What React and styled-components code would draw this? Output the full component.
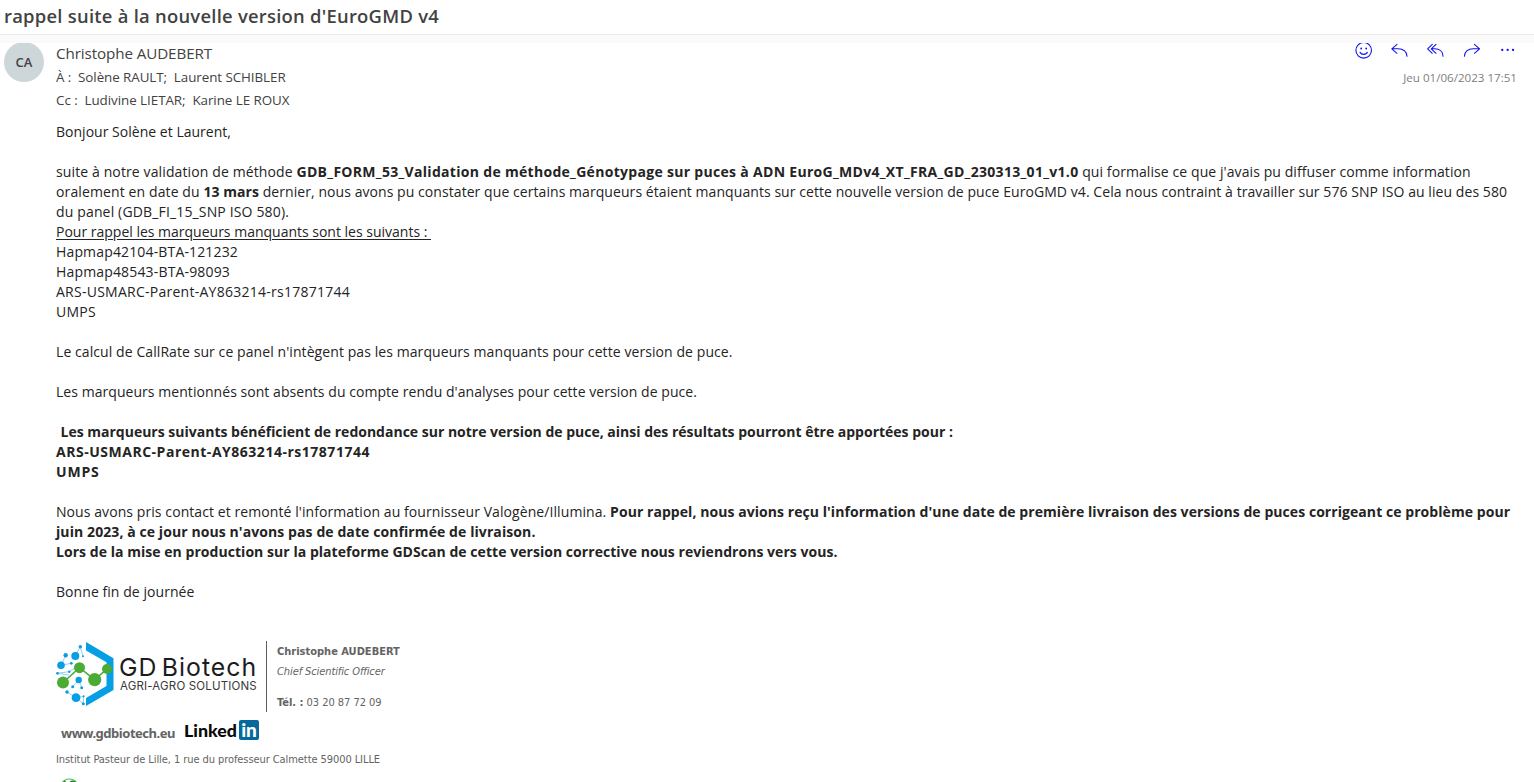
import React from "react";
import styled, { createGlobalStyle } from "styled-components";

const GlobalStyle = createGlobalStyle`
  *, *::before, *::after { box-sizing: border-box; }
  body {
    margin: 0;
    background: #fff;
    color: #242424;
    font-family: "Open Sans", "Noto Sans", sans-serif;
    overflow: hidden;
  }
`;

const Page = styled.main`
  height: 782px;
  overflow: hidden;
  display: flex;
  flex-direction: column;
`;

const SubjectBar = styled.header`
  flex: none;
  height: 35px;
  padding-left: 4px;
  border-bottom: 1px solid #ececec;
`;

const Subject = styled.h1`
  margin: 0;
  font-size: 18.4px;
  font-weight: 600;
  line-height: 32px;
  letter-spacing: 0.253px;
  white-space: pre;
  color: #424242;
`;

const Band = styled.div`
  flex: none;
  height: 8px;
  background: #fafafa;
`;

const Message = styled.article`
  flex: 1;
  min-height: 0;
  overflow: hidden;
  display: flex;
  padding-left: 4px;
`;

const Avatar = styled.div`
  flex: none;
  width: 40px;
  height: 40px;
  margin: -1px 12px 0 0;
  border-radius: 50%;
  background: #cdd6d8;
  color: #424242;
  font-size: 13px;
  font-weight: 600;
  line-height: 41px;
  text-align: center;
`;

const Content = styled.div`
  flex: 1;
  min-width: 0;
`;

const Header = styled.div`
  display: flex;
  justify-content: space-between;
  height: 79px;
`;

const Sender = styled.div`
  padding-bottom: 2px;
  font-size: 15.2px;
  line-height: 20px;
  letter-spacing: -0.1px;
  white-space: pre;
  color: #424242;
`;

const Recipients = styled.div`
  padding-top: 1px;
  font-size: 13.4px;
  line-height: 22px;
  letter-spacing: ${(p) => p.$ls}px;
  white-space: pre;
  color: #424242;
`;

const Meta = styled.div`
  display: flex;
  flex-direction: column;
  align-items: flex-end;
`;

const Actions = styled.div`
  display: flex;
  padding-right: 8px;
`;

const Action = styled.button`
  width: 36px;
  height: 22px;
  padding: 0;
  border: 0;
  background: none;

  svg {
    display: block;
    fill: none;
    stroke: #1010f4;
    stroke-width: 1.08;
    stroke-linecap: round;
    stroke-linejoin: round;
  }
`;

const DateText = styled.time`
  padding: 2px 17px 0 0;
  font-size: 11.6px;
  line-height: 22px;
  white-space: pre;
  color: #808080;
`;

const Body = styled.div`
  font-size: 14px;
`;

const Line = styled.p`
  margin: 0;
  min-height: 20px;
  padding-left: ${(p) => p.$indent || 0}px;
  line-height: 20px;
  white-space: pre;
`;

const Run = styled.span`
  font-weight: ${(p) => (p.$bold ? 700 : 400)};
  letter-spacing: ${(p) => p.$ls || 0}px;
  text-decoration: ${(p) => (p.$underline ? "underline" : "none")};
  text-underline-offset: 2px;
`;

const Signature = styled.footer`
  padding-top: 39px;
  color: #636363;
  font-family: "DejaVu Sans Condensed", "Noto Sans", sans-serif;
  font-size: 11px;
`;

const Card = styled.div`
  display: flex;
  height: 71px;
`;

const Brand = styled.div`
  display: flex;
  width: 211px;
  border-right: 1px solid #5c5c5c;
`;

const BrandText = styled.div`
  padding: 14px 0 0 3px;
  font-family: Inter, sans-serif;
  white-space: pre;
  color: #1c1c1c;
`;

const BrandName = styled.div`
  font-size: 24.8px;
  line-height: 24px;
  letter-spacing: 1px;
  word-spacing: -3.5px;
`;

const BrandTagline = styled.div`
  padding-left: 1px;
  font-size: 11.5px;
  line-height: 15px;
  letter-spacing: 0.17px;
  color: #3a3a3a;
`;

const Contact = styled.div`
  padding: 1px 0 0 10px;
`;

const ContactLine = styled.div`
  padding-top: ${(p) => p.$top || 0}px;
  line-height: 20px;
  letter-spacing: ${(p) => p.$ls || 0}px;
  font-weight: ${(p) => (p.$bold ? 700 : 400)};
  font-style: ${(p) => (p.$italic ? "italic" : "normal")};
  white-space: pre;
`;

const Links = styled.div`
  display: flex;
  height: 37px;
  padding: 8px 0 0 5px;
`;

const Site = styled.a`
  width: 123px;
  padding-top: 3px;
  font-family: "Noto Sans", sans-serif;
  font-size: 13px;
  font-weight: 700;
  line-height: 20px;
  letter-spacing: -0.476px;
`;

const LinkedIn = styled.div`
  display: flex;
  font-family: Lato, sans-serif;
  font-weight: 900;
  font-size: 17.8px;
  line-height: 20px;
  color: #0a0a0a;
`;

const LinkedWord = styled.span`
  width: 55px;
`;

const InBadge = styled.span`
  width: 20px;
  height: 20px;
  border-radius: 2px;
  background: #06699b;
  color: #fff;
  font-size: 19px;
  text-align: center;
`;

const Address = styled.div`
  line-height: 22px;
  letter-spacing: -0.075px;
  white-space: pre;
`;

const EcoIcon = styled.svg`
  display: block;
  margin: 7px 0 0 4px;
`;

const blueDots = [
  [19.3, 15, 4], [5, 24.3, 3.8], [24.3, 5.7, 1.7], [9.7, 14.3, 2.2], [27, 15.3, 1],
  [15.3, 22.3, 1.4], [1.5, 32.3, 1.4], [13.3, 30.7, 1.2], [22.7, 39, 3.2], [25.7, 46.7, 1.5],
  [16.7, 45.7, 1.5], [11, 51, 1.8], [20, 56.7, 4.4], [27.7, 55.3, 1], [27.3, 62.7, 1.5],
];
const greenDots = [[7, 41.5, 6], [23.5, 26.7, 5.5], [38.7, 38.7, 6.6], [51, 28, 5]];

const BrandMark = () => (
  <svg width="60" height="68" viewBox="0 0 60 68">
    <path d="M30 1 57.5 17.2V48.9L30 65V57L50.5 45V21.3L30 9.5Z" fill="#069fe3" />
    <path
      d="M19.3 15 24.3 5.7 27 15.3M9.7 14.3 5 24.3 15.3 22.3M1.3 32.3 13.3 30.7 19 27M1.3 32.3 13 34M16.7 45.7 22.7 39 25.7 46.7M11 51 20 56.7 27.7 55.3 27.3 62.7 20 56.7"
      fill="none" stroke="#5fbfe8" strokeWidth=".7"
    />
    {blueDots.map(([x, y, r]) => <circle key={`${x}-${y}`} cx={x} cy={y} r={r} fill="#069fe3" />)}
    <path d="M7 41.5 23.5 26.7 38.7 38.7 51 28" fill="none" stroke="#4bab34" strokeWidth="1.6" />
    {greenDots.map(([x, y, r]) => <circle key={`${x}-${y}`} cx={x} cy={y} r={r} fill="#4bab34" />)}
  </svg>
);

const icons = [
  ["Réagir", <g key="i"><circle cx="17.7" cy="7.3" r="7.8" /><path d="M14 9.4C15.6 12 19.8 12 21.4 9.4" /><path d="M15.2 5.4v.1M20.2 5.4v.1" strokeWidth="1.8" /></g>],
  ["Répondre", <path key="i" d="M15 1.3 9.8 5.8 15 10.3M9.8 5.8H16C21.6 5.8 25 9 25 13.3" />],
  ["Répondre à tous", <path key="i" d="M14.3 1.3 9.6 5.8 14.3 10.3M18 1.3 13.3 5.8 18 10.3M13.3 5.8H16.5C22 5.8 25 9 25 13.3" />],
  ["Transférer", <path key="i" d="M20.4 1.3 25.6 5.8 20.4 10.3M25.6 5.8H19.4C13.8 5.8 10.4 9 10.4 13.3" />],
  ["Plus", <path key="i" d="M12.2 6.9h.1M17.6 6.9h.1M23 6.9h.1" strokeWidth="2.2" />],
];

const body = [
  [["Bonjour Solène et Laurent,", 0.02]],
  [],
  [
    ["suite à notre validation de méthode ", 0.119],
    ["GDB_FORM_53_Validation de méthode_Génotypage sur puces à ADN EuroG_MDv4_XT_FRA_GD_230313_01_v1.0", 0.304, "b"],
    [" qui formalise ce que j'avais pu diffuser comme information", 0.085],
  ],
  [
    ["oralement en date du ", 0.116],
    ["13 mars", 0.047, "b"],
    [" dernier, nous avons pu constater que certains marqueurs étaient manquants sur cette nouvelle version de puce EuroGMD v4. Cela nous contraint à travailler sur 576 SNP ISO au lieu des 580", 0.065],
  ],
  [["du panel (GDB_FI_15_SNP ISO 580).", 0.151]],
  [["Pour rappel les marqueurs manquants sont les suivants : ", -0.003, "u"]],
  [["Hapmap42104-BTA-121232", 0.152]],
  [["Hapmap48543-BTA-98093", 0.16]],
  [["ARS-USMARC-Parent-AY863214-rs17871744", 0.257]],
  [["UMPS", 0.273]],
  [],
  [["Le calcul de CallRate sur ce panel n'intègent pas les marqueurs manquants pour cette version de puce.", 0.08]],
  [],
  [["Les marqueurs mentionnés sont absents du compte rendu d'analyses pour cette version de puce.", 0.051]],
  [],
  [["Les marqueurs suivants bénéficient de redondance sur notre version de puce, ainsi des résultats pourront être apportées pour :", 0, "b"]],
  [["ARS-USMARC-Parent-AY863214-rs17871744", 0.516, "b"]],
  [["UMPS", 0.801, "b"]],
  [],
  [
    ["Nous avons pris contact et remonté l'information au fournisseur Valogène/Illumina. ", 0.079],
    ["Pour rappel, nous avions reçu l'information d'une date de première livraison des versions de puces corrigeant ce problème pour", 0.061, "b"],
  ],
  [["juin 2023, à ce jour nous n'avons pas de date confirmée de livraison.", 0.09, "b"]],
  [["Lors de la mise en production sur la plateforme GDScan de cette version corrective nous reviendrons vers vous.", 0.046, "b"]],
  [],
  [["Bonne fin de journée", 0.06]],
];

export default function App() {
  return (
    <Page>
      <GlobalStyle />
      <SubjectBar>
        <Subject>rappel suite à la nouvelle version d'EuroGMD v4</Subject>
      </SubjectBar>
      <Band />
      <Message>
        <Avatar>CA</Avatar>
        <Content>
          <Header>
            <div>
              <Sender>Christophe AUDEBERT</Sender>
              <Recipients $ls={-0.07}>{"À :  Solène RAULT;  Laurent SCHIBLER"}</Recipients>
              <Recipients $ls={-0.05}>{"Cc :  Ludivine LIETAR;  Karine LE ROUX"}</Recipients>
            </div>
            <Meta>
              <Actions>
                {icons.map(([label, shape]) => (
                  <Action key={label} aria-label={label}>
                    <svg width="36" height="22" viewBox="0 0 36 22">{shape}</svg>
                  </Action>
                ))}
              </Actions>
              <DateText>Jeu 01/06/2023 17:51</DateText>
            </Meta>
          </Header>
          <Body>
            {body.map((runs, i) => (
              <Line key={i} $indent={i === 15 ? 4.5 : 0}>
                {runs.map(([text, ls, kind]) => (
                  <Run key={text} $ls={ls} $bold={kind === "b"} $underline={kind === "u"}>{text}</Run>
                ))}
              </Line>
            ))}
          </Body>
          <Signature>
            <Card>
              <Brand>
                <BrandMark />
                <BrandText>
                  <BrandName>GD Biotech</BrandName>
                  <BrandTagline>AGRI-AGRO SOLUTIONS</BrandTagline>
                </BrandText>
              </Brand>
              <Contact>
                <ContactLine $bold>Christophe AUDEBERT</ContactLine>
                <ContactLine $italic $ls={-0.099}>Chief Scientific Officer</ContactLine>
                <ContactLine $top={11} $ls={-0.03}><b>Tél. :</b> 03 20 87 72 09</ContactLine>
              </Contact>
            </Card>
            <Links>
              <Site>www.gdbiotech.eu</Site>
              <LinkedIn>
                <LinkedWord>Linked</LinkedWord>
                <InBadge>in</InBadge>
              </LinkedIn>
            </Links>
            <Address>Institut Pasteur de Lille, 1 rue du professeur Calmette 59000 LILLE</Address>
            <EcoIcon width="20" height="16" viewBox="0 0 20 16">
              <path d="M1.5 6C3 2.6 6 1 9.5 1S15 2.2 17 5" fill="none" stroke="#5fb565" strokeWidth="1.2" />
              <path d="M9 4.5C10.5 2.4 13 2 15 3L17 6Z" fill="#1f8a28" />
              <path d="M2.5 5.5 5.5 2.8" stroke="#1f8a28" strokeWidth="1.6" />
            </EcoIcon>
          </Signature>
        </Content>
      </Message>
    </Page>
  );
}
